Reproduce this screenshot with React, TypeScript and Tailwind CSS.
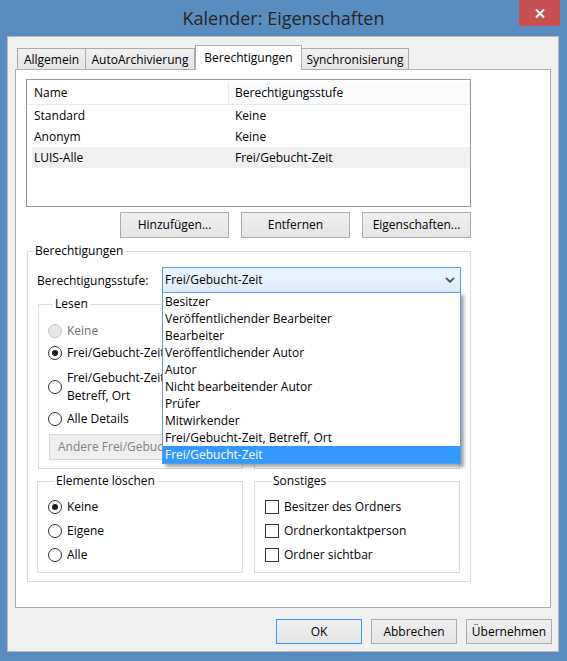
import React from "react";
import clsx from "clsx";

// Outlook dialog "Kalender: Eigenschaften" (Windows 8 look)

const rows = [
  { name: "Standard", level: "Keine" },
  { name: "Anonym", level: "Keine" },
  { name: "LUIS-Alle", level: "Frei/Gebucht-Zeit", selected: true },
];

const levels = [
  "Besitzer",
  "Veröffentlichender Bearbeiter",
  "Bearbeiter",
  "Veröffentlichender Autor",
  "Autor",
  "Nicht bearbeitender Autor",
  "Prüfer",
  "Mitwirkender",
  "Frei/Gebucht-Zeit, Betreff, Ort",
  "Frei/Gebucht-Zeit",
];

function Radio({ checked, disabled, children }: { checked?: boolean; disabled?: boolean; children: React.ReactNode }) {
  return (
    <div className="flex items-center gap-[5px] leading-[16px]">
      <span
        className={clsx(
          "flex h-[14px] w-[14px] shrink-0 items-center justify-center rounded-full border",
          disabled ? "border-[#c4c4c4] bg-[#e6e6e6]" : "border-[#333333] bg-white"
        )}
      >
        {checked && <span className="h-[6px] w-[6px] rounded-full bg-[#1c1c1c]" />}
      </span>
      <span className={disabled ? "text-[#6d6d6d]" : ""}>{children}</span>
    </div>
  );
}

function Check({ children }: { children: React.ReactNode }) {
  return (
    <div className="flex items-center gap-[5px] leading-[16px]">
      <span className="h-[14px] w-[14px] shrink-0 border border-[#333333] bg-white" />
      <span>{children}</span>
    </div>
  );
}

function Btn({ children, className, primary }: { children: React.ReactNode; className?: string; primary?: boolean }) {
  return (
    <button
      className={clsx(
        "flex items-center justify-center border bg-gradient-to-b from-[#f0f0f0] to-[#e5e5e5] leading-none",
        primary ? "border-[#3399ff]" : "border-[#acacac]",
        className
      )}
    >
      {children}
    </button>
  );
}

function Group({ title, className, legendClass, children }: { title: string; className?: string; legendClass?: string; children: React.ReactNode }) {
  return (
    <fieldset className={clsx("border border-[#dcdcdc]", className)}>
      <legend className={clsx("px-[2px] leading-[16px]", legendClass ?? "ml-[6px]")}>{title}</legend>
      {children}
    </fieldset>
  );
}

export default function App() {
  return (
    <div className="flex h-[661px] w-[567px] flex-col bg-[#598cbf] font-['Open_Sans','Noto_Sans',sans-serif] text-[12px] text-black">
      {/* title bar */}
      <div className="relative flex h-[36px] shrink-0 items-center justify-center">
        <span className="text-[18px] text-[#262626]">Kalender: Eigenschaften</span>
        <button className="absolute right-[7px] top-0 flex h-[26px] w-[41px] items-center justify-center bg-[#c75050]">
          <svg width="10" height="9" viewBox="0 0 10 9">
            <path d="M1 0.5 L9 8.5 M9 0.5 L1 8.5" stroke="#fff" strokeWidth="2" />
          </svg>
        </button>
      </div>

      {/* client area */}
      <div className="ml-[7px] flex h-[616px] w-[552px] flex-col border border-[#b3bcc6] bg-[#f0f0f0]">
        {/* tabs */}
        <div className="ml-[7px] mt-[8px] flex items-end pl-[2px]">
          <div className="flex h-[21px] w-[69px] items-center justify-center border border-b-0 border-[#acacac] bg-gradient-to-b from-[#f0f0f0] to-[#e5e5e5] pt-[2px]">
            Allgemein
          </div>
          <div className="flex h-[21px] w-[109px] items-center justify-center border border-b-0 border-l-0 border-[#acacac] bg-gradient-to-b from-[#f0f0f0] to-[#e5e5e5] pt-[2px]">
            AutoArchivierung
          </div>
          <div className="relative z-10 -mb-px flex h-[25px] w-[107px] items-center justify-center border border-b-0 border-[#acacac] bg-white">
            Berechtigungen
          </div>
          <div className="flex h-[21px] w-[107px] items-center justify-center border border-b-0 border-l-0 border-[#acacac] bg-gradient-to-b from-[#f0f0f0] to-[#e5e5e5] pt-[2px]">
            Synchronisierung
          </div>
        </div>

        {/* tab page */}
        <div className="ml-[7px] h-[539px] w-[536px] border border-[#acacac] bg-white">
          {/* list view */}
          <div className="ml-[10px] mt-[9px] h-[128px] w-[445px] border border-[#999999] bg-white">
            <div className="flex h-[25px] border-b border-[#e5edf7] pt-[2px]">
              <div className="flex w-[201px] items-center pl-[7px]">Name</div>
              <div className="flex flex-1 items-center border-x border-[#e3ebf5] bg-[#fbfcfe] pl-[6px]">Berechtigungsstufe</div>
            </div>
            {rows.map((r) => (
              <div key={r.name} className={clsx("ml-[5px] flex h-[21px] items-center", r.selected && "bg-[#f0f0f0]")}>
                <div className="w-[203px] pl-[2px]">{r.name}</div>
                <div>{r.level}</div>
              </div>
            ))}
          </div>

          <div className="ml-[10px] mt-[5px] flex w-[445px] justify-end gap-[12px]">
            <Btn className="h-[26px] w-[109px]">Hinzufügen...</Btn>
            <Btn className="h-[26px] w-[109px]">Entfernen</Btn>
            <Btn className="h-[26px] w-[109px]">Eigenschaften...</Btn>
          </div>

          {/* Berechtigungen group */}
          <Group title="Berechtigungen" legendClass="ml-[5px]" className="ml-[11px] mt-[5px] w-[444px] pb-[8px]">
            <div className="mt-[8px] flex items-center pl-[9px]">
              <div className="w-[125px] pt-[2px]">Berechtigungsstufe:</div>
              <div className="relative flex h-[26px] w-[299px] items-center justify-between border border-[#569de5] bg-gradient-to-b from-[#ecf4fc] to-[#dcecfc] pl-[2px] pr-[5px]">
                <span>Frei/Gebucht-Zeit</span>
                <svg width="10" height="6" viewBox="0 0 10 6">
                  <path d="M1 0.8 L5 4.8 L9 0.8" stroke="#4d4d4d" strokeWidth="1.8" fill="none" />
                </svg>
                {/* open dropdown list */}
                <div className="absolute left-[-1px] top-[24px] z-20 w-[299px] border border-[#569de5] bg-white shadow-[3px_3px_3px_rgba(0,0,0,0.35)]">
                  {levels.map((l, i) => (
                    <div
                      key={l}
                      className={clsx(
                        "flex h-[17px] items-center pl-[2px] pt-[1px]",
                        i === levels.length - 1 && "bg-[#3399ff] text-white"
                      )}
                    >
                      {l}
                    </div>
                  ))}
                </div>
              </div>
            </div>

            <div className="mt-[3px] flex gap-[11px] pl-[10px]">
              <Group title="Lesen" legendClass="ml-[5px]" className="h-[173px] w-[205px] pl-[9px]">
                <div className="mt-[11px]">
                  <Radio disabled>Keine</Radio>
                </div>
                <div className="mt-[6px]">
                  <Radio checked>Frei/Gebucht-Zeit</Radio>
                </div>
                <div className="mt-[8px] flex items-center gap-[5px] leading-[18px]">
                  <span className="h-[14px] w-[14px] shrink-0 rounded-full border border-[#333333] bg-white" />
                  <span>
                    Frei/Gebucht-Zeit,
                    <br />
                    Betreff, Ort
                  </span>
                </div>
                <div className="mt-[6px]">
                  <Radio>Alle Details</Radio>
                </div>
                <button className="ml-[1px] mt-[7px] flex h-[26px] w-[182px] items-center border border-[#d9d9d9] bg-[#efefef] pl-[8px] text-[#838383]">
                  Andere Frei/Gebucht-Zeit...
                </button>
              </Group>
              {/* box hidden behind the open list */}
              <div className="mt-[8px] h-[165px] w-[206px] border border-[#dcdcdc]" />
            </div>

            <div className="mt-[4px] flex gap-[11px] pl-[9px]">
              <Group title="Elemente löschen" className="h-[100px] w-[206px] pl-[10px]">
                <div className="mt-[10px] flex flex-col gap-[8px]">
                  <Radio checked>Keine</Radio>
                  <Radio>Eigene</Radio>
                  <Radio>Alle</Radio>
                </div>
              </Group>
              <Group title="Sonstiges" className="h-[100px] w-[206px] pl-[10px]">
                <div className="mt-[10px] flex flex-col gap-[8px]">
                  <Check>Besitzer des Ordners</Check>
                  <Check>Ordnerkontaktperson</Check>
                  <Check>Ordner sichtbar</Check>
                </div>
              </Group>
            </div>
          </Group>
        </div>

        {/* dialog buttons */}
        <div className="mt-[11px] flex justify-end gap-[9px] pr-[6px]">
          <Btn primary className="h-[25px] w-[86px]">OK</Btn>
          <Btn className="h-[25px] w-[86px]">Abbrechen</Btn>
          <Btn className="h-[25px] w-[86px]">Übernehmen</Btn>
        </div>
      </div>
    </div>
  );
}
